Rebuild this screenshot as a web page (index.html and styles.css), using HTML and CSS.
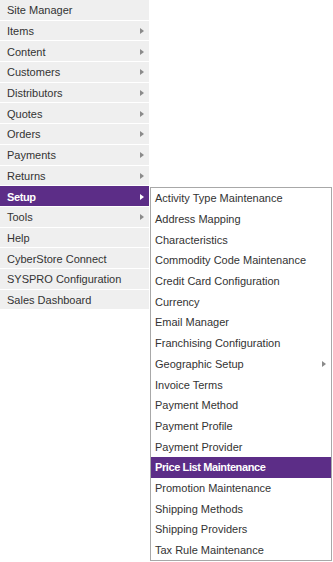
FILE: index.html
```html
<!DOCTYPE html>
<html>
<head>
    <title>Admin Menu</title>
    <link rel="stylesheet" href="styles.css">
</head>
<body>
    <div class="menu-wrap">
        <ul class="main-menu">
            <li><span>Site Manager</span></li>
            <li class="has-sub"><span>Items</span><i class="arrow"></i></li>
            <li class="has-sub"><span>Content</span><i class="arrow"></i></li>
            <li class="has-sub"><span>Customers</span><i class="arrow"></i></li>
            <li class="has-sub"><span>Distributors</span><i class="arrow"></i></li>
            <li class="has-sub"><span>Quotes</span><i class="arrow"></i></li>
            <li class="has-sub"><span>Orders</span><i class="arrow"></i></li>
            <li class="has-sub"><span>Payments</span><i class="arrow"></i></li>
            <li class="has-sub"><span>Returns</span><i class="arrow"></i></li>
            <li class="has-sub active"><span>Setup</span><i class="arrow"></i></li>
            <li class="has-sub"><span>Tools</span><i class="arrow"></i></li>
            <li><span>Help</span></li>
            <li><span>CyberStore Connect</span></li>
            <li><span>SYSPRO Configuration</span></li>
            <li><span>Sales Dashboard</span></li>
        </ul>

        <ul class="sub-menu">
            <li><span>Activity Type Maintenance</span></li>
            <li><span>Address Mapping</span></li>
            <li><span>Characteristics</span></li>
            <li><span>Commodity Code Maintenance</span></li>
            <li><span>Credit Card Configuration</span></li>
            <li><span>Currency</span></li>
            <li><span>Email Manager</span></li>
            <li><span>Franchising Configuration</span></li>
            <li class="has-sub"><span>Geographic Setup</span><i class="arrow"></i></li>
            <li><span>Invoice Terms</span></li>
            <li><span>Payment Method</span></li>
            <li><span>Payment Profile</span></li>
            <li><span>Payment Provider</span></li>
            <li class="active"><span>Price List Maintenance</span></li>
            <li><span>Promotion Maintenance</span></li>
            <li><span>Shipping Methods</span></li>
            <li><span>Shipping Providers</span></li>
            <li><span>Tax Rule Maintenance</span></li>
        </ul>
    </div>
</body>
</html>
```

FILE: styles.css
```css
body {
    margin: 0;
    background: #fff;
    font-family: "Liberation Sans", Arial, sans-serif;
    font-size: 11px;
    color: #333;
}
ul {
    list-style: none;
    margin: 0;
    padding: 0;
}
.menu-wrap {
    display: flex;
    align-items: flex-start;
}
.main-menu {
    width: 149px;
}
.main-menu li {
    display: flex;
    align-items: center;
    justify-content: space-between;
    box-sizing: border-box;
    height: 20.7px;
    padding: 1px 5px 0 7px;
    background: #efefef;
    border-bottom: 1px solid #fff;
}
.active {
    background: #5c2d87;
    color: #fff;
    font-weight: bold;
    letter-spacing: -0.4px;
}
.main-menu li.active {
    background: #5c2d87;
}
.arrow {
    width: 0;
    height: 0;
    border-top: 3px solid transparent;
    border-bottom: 3px solid transparent;
    border-left: 4px solid #8a8a8a;
}
.active .arrow {
    border-left-color: #fff;
}
.sub-menu {
    margin: 187px 0 0 1px;
    width: 180px;
    border: 1px solid #a8a8a8;
    background: #fff;
}
.sub-menu li {
    display: flex;
    align-items: center;
    justify-content: space-between;
    box-sizing: border-box;
    height: 20.7px;
    padding: 0 5px 0 4px;
}
```
